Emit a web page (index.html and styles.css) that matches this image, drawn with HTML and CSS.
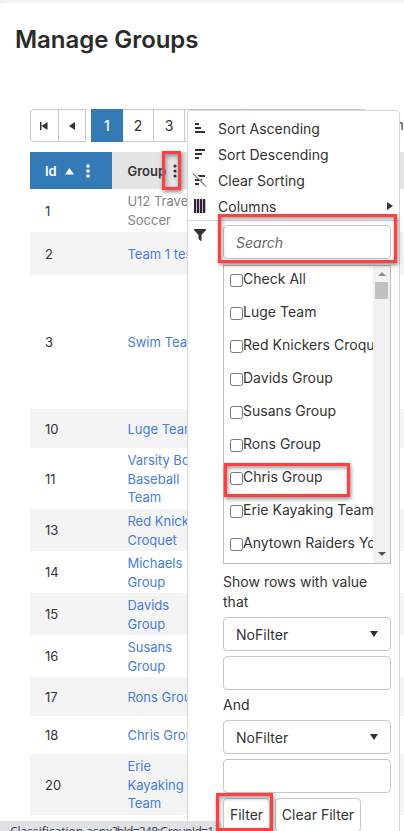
FILE: index.html
```html
<!DOCTYPE html>
<html lang="en">
<head>
<meta charset="utf-8">
<title>Manage Groups</title>
<link rel="stylesheet" href="styles.css">
</head>
<body>
<main class="page">
  <h1>Manage Groups</h1>
  <nav class="pager">
    <div class="arrows">
      <span><svg width="10" height="10" viewBox="0 0 10 10"><path d="M1 1h1.500v8H1zM8.500 1v8L2.500 5z"/></svg></span>
      <span><svg width="10" height="10" viewBox="0 0 10 10"><path d="M8 1v8L2 5z"/></svg></span>
    </div>
    <div class="pages"><b>1</b><span>2</span><span>3</span><span></span></div>
    <span class="summary">n</span>
  </nav>
  <section class="grid">
    <div class="row head">
      <div class="id">Id <svg class="up" width="9" height="7" viewBox="0 0 9 7"><path d="M4.500 0L9 6.500H0z"/></svg><svg class="dots" width="4" height="14" viewBox="0 0 4 14"><circle cx="2" cy="2" r="1.800"/><circle cx="2" cy="7" r="1.800"/><circle cx="2" cy="12" r="1.800"/></svg></div>
      <div class="name">Group <svg class="dots" width="4" height="14" viewBox="0 0 4 14"><circle cx="2" cy="2" r="1.600"/><circle cx="2" cy="7" r="1.600"/><circle cx="2" cy="12" r="1.600"/></svg></div>
      <div class="admin">A</div>
    </div>
    <div class="row h43"><div class="id">1</div><div class="name muted">U12 Travel<br>Soccer</div></div>
    <div class="row h43 alt"><div class="id">2</div><div class="name">Team 1 test</div><div class="admin"><a>Te</a><br>S</div></div>
    <div class="row h134"><div class="id">3</div><div class="name">Swim Team</div><div class="admin">S<br><a>Te</a><br>ac<br><a>Te</a><br>&thinsp;a<br>o<br>A</div></div>
    <div class="row h39 alt"><div class="id">10</div><div class="name">Luge Team</div></div>
    <div class="row h61"><div class="id">11</div><div class="name">Varsity Boys<br>Baseball<br>Team</div><div class="admin">S</div></div>
    <div class="row h42 alt"><div class="id">13</div><div class="name">Red Knickers<br>Croquet</div></div>
    <div class="row h42"><div class="id">14</div><div class="name">Michaels<br>Group</div></div>
    <div class="row h42 alt"><div class="id">15</div><div class="name">Davids<br>Group</div></div>
    <div class="row h42"><div class="id">16</div><div class="name">Susans<br>Group</div></div>
    <div class="row h39 alt"><div class="id">17</div><div class="name">Rons Group</div></div>
    <div class="row h38"><div class="id">18</div><div class="name">Chris Group</div></div>
    <div class="row h61 alt"><div class="id">20</div><div class="name">Erie<br>Kayaking<br>Team</div></div>
  </section>
</main>

<aside class="menu">
  <div class="item"><svg width="12" height="12" viewBox="0 0 12 12"><path d="M1 1h4v2H1zM1 5h6v2H1zM1 9h10v2H1z"/></svg>Sort Ascending</div>
  <div class="item"><svg width="12" height="12" viewBox="0 0 12 12"><path d="M1 1h10v2H1zM1 5h7v2H1zM1 9h4v2H1z"/></svg>Sort Descending</div>
  <div class="item"><svg width="12" height="14" viewBox="0 0 12 14"><path d="M3.500 2H11v2H5.500zM1 6h3l2 2H1zM6 6h2v2zM1 10h4v2H1z"/><path d="M-1 .5l13 13" fill="none" stroke="#333"/></svg>Clear Sorting</div>
  <div class="item"><svg width="12" height="14" viewBox="0 0 12 14"><path d="M0 0h2.300v14H0zM3 0h2.300v14H3zM6 0h2.300v14H6zM9 0h2.300v14H9z" fill="#33203a"/></svg>Columns<svg class="more" width="6" height="8" viewBox="0 0 6 8"><path d="M0 0l6 4-6 4z"/></svg></div>
  <div class="filter">
    <svg class="funnel" width="12" height="13" viewBox="0 0 12 13"><path d="M0 0h12v1L7.500 6v6.500L4.500 10V6L0 1z"/></svg>
    <div class="form">
      <div class="field search">Search</div>
      <div class="list">
        <div class="options">
          <label><i></i>Check All</label>
          <label><i></i>Luge Team</label>
          <label><i></i>Red Knickers Croquet</label>
          <label><i></i>Davids Group</label>
          <label><i></i>Susans Group</label>
          <label><i></i>Rons Group</label>
          <label><i></i>Chris Group</label>
          <label><i></i>Erie Kayaking Team</label>
          <label><i></i>Anytown Raiders Youth</label>
        </div>
        <div class="scroll">
          <svg width="8" height="4" viewBox="0 0 8 4"><path d="M4 0l4 4H0z" fill="#8b8b8b"/></svg>
          <b></b>
          <svg class="down" width="8" height="4" viewBox="0 0 8 4"><path d="M0 0h8L4 4z" fill="#505050"/></svg>
        </div>
      </div>
      <p class="hint">Show rows with value that</p>
      <div class="field">NoFilter<svg width="8" height="6" viewBox="0 0 8 6"><path d="M0 0h8L4 6z"/></svg></div>
      <div class="field"></div>
      <p class="and">And</p>
      <div class="field">NoFilter<svg width="8" height="6" viewBox="0 0 8 6"><path d="M0 0h8L4 6z"/></svg></div>
      <div class="field"></div>
      <div class="buttons"><span class="apply">Filter</span><span class="clear">Clear Filter</span></div>
    </div>
  </div>
</aside>
<div class="status">Classification.aspx<span class="query">?bId=248:GroupId=1</span></div>
<div class="mark mark-dots"></div>
<div class="mark mark-search"></div>
<div class="mark mark-option"></div>
<div class="mark mark-filter"></div>
</body>
</html>
```
FILE: styles.css
```css
* { box-sizing: border-box; }
body {
  margin: 0;
  width: 404px;
  height: 831px;
  overflow: hidden;
  position: relative;
  background: #f3f3f3;
  font-family: Inter, sans-serif;
  font-size: 13px;
  color: #333;
}
svg { display: block; flex: none; fill: #333; }
.page {
  margin-top: 3px;
  height: 828px;
  background: #fff;
  border-top-left-radius: 5px;
  overflow: hidden;
}
h1 {
  margin: 21px 0 0 15px;
  font-size: 24px;
  line-height: 32px;
  font-weight: 600;
  letter-spacing: -.05px;
  color: #2b2b2b;
}
.pager { display: flex; margin: 53px 0 0 30px; height: 33px; width: 460px; }
.arrows, .pages { display: flex; border: 1px solid #c8c8c8; }
.arrows { width: 56px; border-radius: 4px 0 0 4px; margin-right: 5px; }
.arrows span { flex: 1; display: flex; align-items: center; justify-content: center; }
.arrows span + span { border-left: 1px solid #c8c8c8; }
.pages { width: 274px; }
.pages b, .pages span {
  width: 31px;
  line-height: 31px;
  text-align: center;
  border-right: 1px solid #c8c8c8;
  font-size: 14px;
}
.pages b { background: #337ab7; color: #fff; font-weight: 500; margin: -1px 0 -1px -1px; width: 32px; line-height: 33px; border: 0; }
.pages span:last-child { flex: 1; border: 0; }
.summary { margin-left: 31px; line-height: 33px; }
.grid { margin: 10px 0 0 30px; width: 400px; }
.row { display: flex; align-items: center; line-height: 18.6px; padding-top: 1px; }
.alt { background: #f4f4f4; }
.head { height: 37px; background: #e4e4e4; font-weight: 600; padding-top: 0; }
.head .id { background: #337ab7; color: #fff; height: 37px; display: flex; align-items: center; padding-top: 1px; }
.head .id svg { fill: #fff; }
.head .up { margin-left: 8px; }
.head .id .dots { margin-left: 12px; }
.head .name { display: flex; align-items: center; color: #333; padding-top: 1px; }
.head .name .dots { margin-left: 7px; }
.id { width: 82px; padding-left: 15px; flex: none; }
.name { width: 256px; padding-left: 15.4px; flex: none; color: #477ddd; }
.name.muted { color: #848484; }
.admin { white-space: nowrap; }
.admin a { color: #3b8be0; }
.h43 { height: 43px; }
.h134 { height: 134px; }
.h39 { height: 39px; }
.h61 { height: 61px; }
.h42 { height: 42px; }
.h38 { height: 38px; }
.menu {
  position: absolute;
  left: 187px;
  top: 110px;
  width: 213px;
  height: 730px;
  padding-top: 4px;
  background: #fff;
  border: 1px solid #d8d8d8;
  border-radius: 4px 4px 0 0;
  font-size: 14px;
  letter-spacing: .02px;
}
.item { display: flex; align-items: center; height: 26px; padding-left: 6px; }
.item > svg:first-child { margin-right: 12px; width: 12px; overflow: visible; }
.item .more { margin: 0 6px 0 auto; }
.filter { display: flex; border-top: 1px solid #dcdcdc; margin-top: 1px; padding: 4px 8px 0 6px; }
.funnel { margin: 4px 17px 0 0; }
.form { width: 168px; }
.field {
  height: 34px;
  margin-bottom: 5px;
  border: 1px solid #c6c6c6;
  border-radius: 4px;
  padding: 0 12px;
  display: flex;
  align-items: center;
  justify-content: space-between;
}
.search { font-style: italic; color: #666; margin-bottom: 6px; }
.list { display: flex; height: 299px; border: 1px solid #bdbdbd; }
.options { flex: 1; overflow: hidden; white-space: nowrap; padding-left: 6px; }
.options label { display: flex; height: 33px; line-height: 26px; }
.options i {
  flex: none;
  width: 13px;
  height: 13px;
  margin-top: 8px;
  border: 1px solid #767676;
  border-radius: 2.5px;
}
.scroll { width: 17px; background: #f1f1f1; display: flex; flex-direction: column; align-items: center; padding: 6px 0 7px; }
.scroll b { width: 13px; height: 17px; margin-top: 6px; background: #c1c1c1; }
.down { margin-top: auto; }
p { margin: 0; line-height: 20px; }
.hint { padding: 8px 0 5px; }
.and { height: 25px; line-height: 20px; }
.buttons { display: flex; gap: 5px; }
.buttons span { height: 34px; line-height: 32px; text-align: center; border: 1px solid #c6c6c6; border-radius: 4px; }
.apply { width: 47px; }
.clear { width: 86px; }
.status {
  position: absolute;
  left: 0;
  top: 821px;
  width: 221px;
  height: 22px;
  padding-left: 10px;
  background: #dee1e6;
  border-top-right-radius: 4px;
  font: 12px/22px "Open Sans", sans-serif;
  color: #3c4043;
  white-space: nowrap;
  overflow: hidden;
}
.query { letter-spacing: -.7px; }
.mark {
  position: absolute;
  border: 3px solid #fb4141;
  box-shadow: 1px 2px 4px rgba(0,0,0,.45), inset 1px 2px 4px rgba(0,0,0,.4);
}
.mark-dots { left: 162px; top: 151px; width: 19px; height: 39px; }
.mark-search { left: 218px; top: 214px; width: 179px; height: 49px; }
.mark-option { left: 224px; top: 463px; width: 126px; height: 34px; }
.mark-filter { left: 216px; top: 793px; width: 57px; height: 38px; }
```
